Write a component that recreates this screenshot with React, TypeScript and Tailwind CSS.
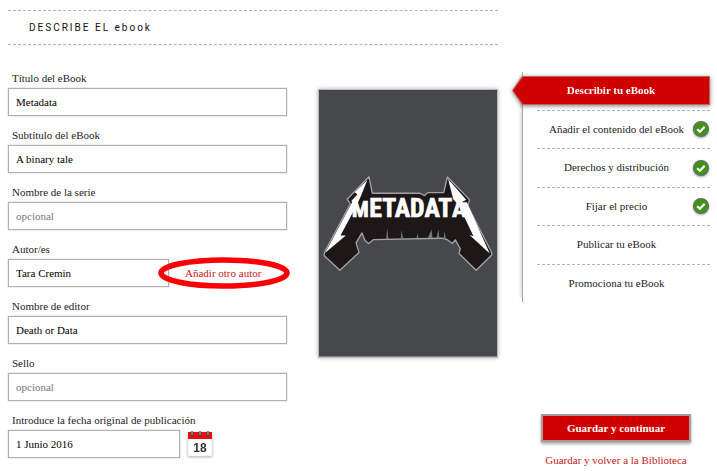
import type { ReactNode } from "react";

const serif = "font-['Liberation_Serif',Georgia,serif]";
const box =
  "h-7 min-w-0 border border-[#b0b0b0] bg-white px-[7px] text-[11px] text-black shadow-[0_0_1px_rgba(0,0,0,0.4)] placeholder:text-[#777] placeholder:opacity-100 outline-none";

function Field({
  id,
  label,
  value,
  placeholder,
  width = "w-full",
  children,
}: {
  id: string;
  label: string;
  value?: string;
  placeholder?: string;
  width?: string;
  children?: ReactNode;
}) {
  return (
    <div className="flex h-[57px] flex-col">
      <label htmlFor={id} className="h-[18px] pl-1 text-[11px] leading-4 whitespace-nowrap text-[#222]">
        {label}
      </label>
      <div className="flex items-center">
        <input id={id} type="text" defaultValue={value} placeholder={placeholder} className={`${box} ${width}`} />
        {children}
      </div>
    </div>
  );
}

function Cover() {
  return (
    <svg viewBox="25 28 538 806" className="block w-full" role="img" aria-label="Metadata">
      <rect x="25" y="28" width="538" height="806" fill="#47484c" />
      <path
        d="M176 290 186 340H330L344 347 354 338H402L413 291 475 354 480 361 474 377 547 519V527L500 573 448 522 452 508 437 481 428 492 412 480 396 476 190 480 175 492 164 483 155 460 137 490 146 519 88 573 40 528 42 518 120 372 110 358Z"
        fill="#1d1718"
        stroke="#a3a3a5"
        strokeWidth="4"
        strokeLinejoin="round"
      />
      <path
        d="M228 479 231 446 235 478ZM272 477 275 452 279 476ZM320 476 322 462 326 475ZM354 475 365 450 368 475ZM380 476 386 450 389 476ZM402 477 404 454 409 479Z"
        fill="#77777a"
      />
      <path d="M171 300 133 337 141 344 122 364 126 366 44 520 106 468 90 468 139 376 152 348Z" fill="#fff" />
      <path d="M415 297 431 358 448 378 492 470 480 466 541 522 472 367 456 367 470 360Z" fill="#fff" />
      <g
        fill="#fff"
        stroke="#fff"
        strokeWidth="2"
        fontFamily="'Liberation Sans Narrow','Roboto Condensed','Liberation Sans',sans-serif"
        fontWeight="700"
      >
        <text x="124" y="413" fontSize="68">M</text>
        <text x="177" y="413" fontSize="78">ETADAT</text>
        <text x="427" y="413" fontSize="74">A</text>
      </g>
    </svg>
  );
}

function Calendar() {
  return (
    <svg viewBox="0 0 26 28" className="h-7 w-[26px] drop-shadow-[0_1px_1px_rgba(0,0,0,0.3)]" aria-hidden="true">
      <rect x="1" y="3" width="24" height="23" rx="1" fill="#fff" stroke="#e4e4e4" strokeWidth="0.6" />
      <rect x="1" y="2" width="24" height="7" fill="#f40808" />
      <g stroke="#4c4444" strokeWidth="3" strokeLinecap="round">
        <path d="M5 2.5v3M13 2.5v3M21 2.5v3" />
      </g>
      <g stroke="#aaa" strokeWidth="1">
        <path d="M5 1v4M13 1v4M21 1v4" />
      </g>
      <text
        x="13"
        y="22"
        textAnchor="middle"
        fontSize="12"
        fontWeight="700"
        fontFamily="'Liberation Sans',sans-serif"
        fill="#333"
      >
        18
      </text>
    </svg>
  );
}

function Check() {
  return (
    <svg
      viewBox="0 0 18 18"
      className="absolute right-0 size-[18px] drop-shadow-[0_1px_1px_rgba(0,0,0,0.35)]"
      role="img"
      aria-label="Completado"
    >
      <circle cx="9" cy="9" r="7.4" fill="#3f9416" stroke="#68705f" strokeWidth="1.4" />
      <path d="m5.2 9.2 2.7 2.5 4.8-5" fill="none" stroke="#fff" strokeWidth="2.2" />
    </svg>
  );
}

const dashes =
  "bg-[repeating-linear-gradient(90deg,#b4b4b4_0_3px,transparent_3px_5px)] bg-[length:100%_1px] bg-no-repeat";

const steps = [
  { name: "Añadir el contenido del eBook", done: true },
  { name: "Derechos y distribución", done: true },
  { name: "Fijar el precio", done: true },
  { name: "Publicar tu eBook", done: false },
  { name: "Promociona tu eBook", done: false },
];

export default function App() {
  return (
    <div className={`flex gap-[14px] bg-white pt-[10px] pr-[7px] pl-2 ${serif}`}>
      <main className="min-w-0 flex-1">
        <header className="border-y border-dashed border-[#b4b4b4] py-2 pl-[21px] shadow-[0_3px_3px_-3px_rgba(0,0,0,0.12)]">
          <h1 className="font-[Roboto,'Noto_Sans',sans-serif] text-[10px] leading-[17px] tracking-[2px] text-[#111]">
            DESCRIBE EL ebook
          </h1>
        </header>
        <div className="flex items-start gap-[31px] pt-[25px]">
          <form className="min-w-0 flex-1">
            <Field id="titulo" label="Título del eBook" value="Metadata" />
            <Field id="subtitulo" label="Subtítulo del eBook" value="A binary tale" />
            <Field id="serie" label="Nombre de la serie" placeholder="opcional" />
            <Field id="autor" label="Autor/es" value="Tara Cremin" width="w-[161px]">
              <span className="relative ml-4 flex items-center">
                <a href="#autor" className="text-[11px] leading-4 whitespace-nowrap text-[#c4161c]">
                  Añadir otro autor
                </a>
                <svg
                  viewBox="0 0 134 32"
                  className="pointer-events-none absolute top-1/2 left-1/2 h-8 w-[134px] max-w-none -translate-x-1/2 -translate-y-1/2"
                  aria-hidden="true"
                >
                  <ellipse cx="68" cy="16" rx="63" ry="13" fill="none" stroke="#fb0007" strokeWidth="5.6" />
                </svg>
              </span>
            </Field>
            <Field id="editor" label="Nombre de editor" value="Death or Data" />
            <Field id="sello" label="Sello" placeholder="opcional" />
            <Field
              id="fecha"
              label="Introduce la fecha original de publicación"
              value="1 Junio 2016"
              width="w-[172px]"
            >
              <button type="button" aria-label="Elegir fecha" className="ml-[7px]">
                <Calendar />
              </button>
            </Field>
          </form>
          <div className="mt-[19px] w-[180px] border border-[#bbb] shadow-[0_0_4px_rgba(0,0,0,0.3)]">
            <Cover />
          </div>
        </div>
      </main>

      <aside className="w-[198px] shrink-0 pt-[62px] text-[11px] text-[#222]">
        <nav className="ml-[10px] h-[230px] border-l border-[#aaa] pt-1 shadow-[-4px_0_4px_-4px_rgba(0,0,0,0.3)]">
          <div className="-ml-[11px] drop-shadow-[0_1px_2px_rgba(0,0,0,0.5)]">
            <div className="bg-[#b66] p-px [clip-path:polygon(10px_0,100%_0,100%_100%,10px_100%,0_50%)]">
              <a
                href="#titulo"
                aria-current="step"
                className="block bg-[#d00000] text-center leading-[27px] font-bold text-white [clip-path:polygon(10px_0,100%_0,100%_100%,10px_100%,0_50%)]"
              >
                Describir tu eBook
              </a>
            </div>
          </div>
          <ul className="mt-[5px] grid h-[192px] auto-rows-fr">
            {steps.map((step) => (
              <li key={step.name} className="relative flex items-center justify-center">
                <span className={`absolute top-0 right-0 left-[14px] h-px ${dashes}`} />
                <a href="#paso">{step.name}</a>
                {step.done && <Check />}
              </li>
            ))}
          </ul>
        </nav>
        <div className="mt-28 ml-[10px] flex flex-col items-center">
          <button
            type="button"
            className="h-7 w-[150px] border-2 border-[#a89a9a] bg-[#d00000] text-[11px] font-bold text-white shadow-[0_2px_3px_rgba(0,0,0,0.35)]"
          >
            Guardar y continuar
          </button>
          <a href="#biblioteca" className="mt-[10px] leading-4 whitespace-nowrap text-[#c4161c]">
            Guardar y volver a la Biblioteca
          </a>
        </div>
      </aside>
    </div>
  );
}
